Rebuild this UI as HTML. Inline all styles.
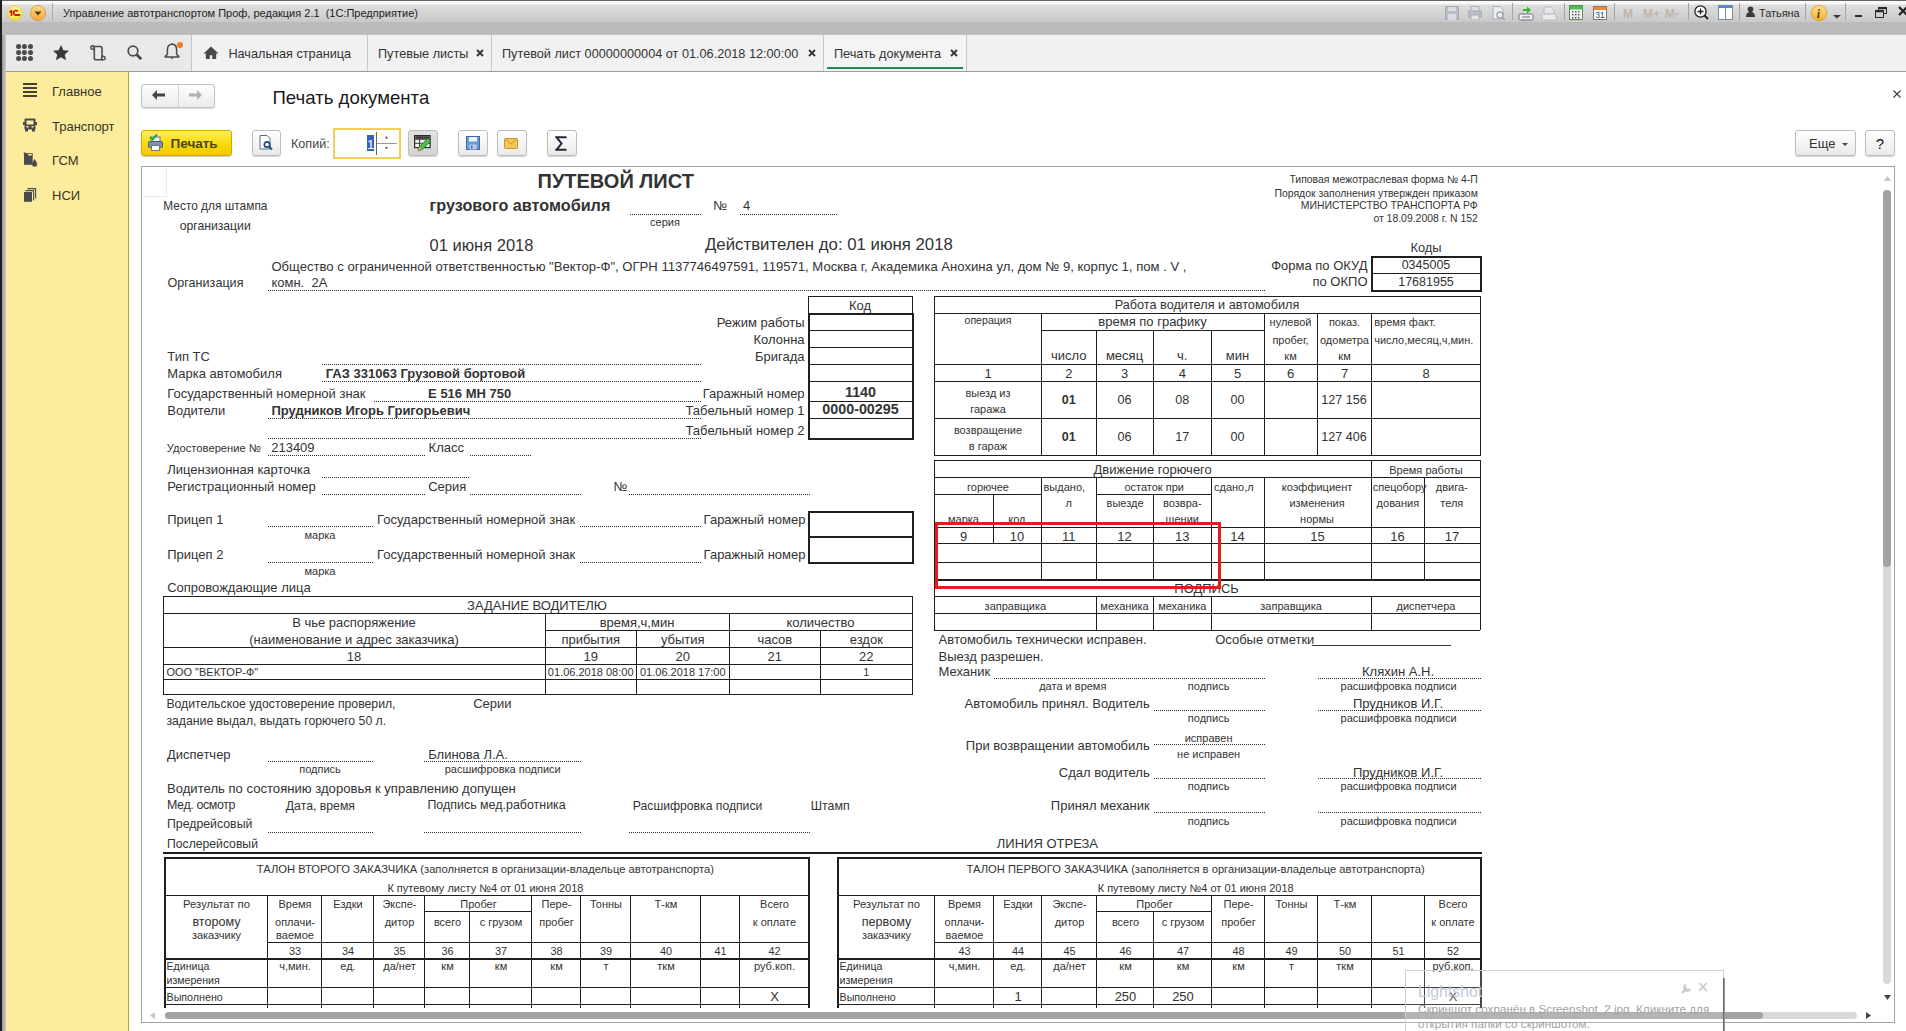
<!DOCTYPE html><html><head><meta charset="utf-8"><style>
html,body{margin:0;padding:0;}
body{width:1906px;height:1031px;overflow:hidden;position:relative;background:#fff;font-family:'Liberation Sans',sans-serif;color:#2a2a2a;}
.t{position:absolute;white-space:pre;}
.b{position:absolute;}
.ic{position:absolute;}
</style></head><body>
<div class="b" style="left:0px;top:0px;width:1906px;height:35px;background:linear-gradient(180deg,#646464 0px,#646464 1px,#fbfbfb 1px,#f8f8f8 4px,#dedede 5px,#c9c9c9 22px,#bbbbbb 22px,#bbbbbb 34px,#c4c4c4 35px);"></div>
<div class="b" style="left:0px;top:0px;width:2px;height:1031px;background:#1e1e1e;"></div>
<div class="b" style="left:2px;top:35px;width:4px;height:996px;background:linear-gradient(90deg,#9a9a9a,#c9c9c9);"></div>
<svg class="ic" style="left:6px;top:5px" width="18" height="17" viewBox="0 0 18 17"><defs><radialGradient id="g1" cx="45%" cy="35%" r="65%"><stop offset="0" stop-color="#fdf8b0"/><stop offset="0.7" stop-color="#f8ea60"/><stop offset="1" stop-color="#f4d820"/></radialGradient></defs><circle cx="9" cy="8" r="7.4" fill="url(#g1)" stroke="#d8c060" stroke-width="0.6"/><path d="M3.2 6.6L5 5H6.3V10.9H4.7V7.3L3.6 7.9z" fill="#d01000"/><path d="M11.7 6.5A2.3 2.3 0 1 0 9.9 10.1" stroke="#d01000" stroke-width="1.7" fill="none"/><rect x="9.6" y="9" width="4.6" height="1.9" fill="#d01000"/></svg>
<svg class="ic" style="left:29px;top:4px" width="18" height="18" viewBox="0 0 18 18"><defs><linearGradient id="g2" x1="0" y1="0" x2="0" y2="1"><stop offset="0" stop-color="#ffd98a"/><stop offset="1" stop-color="#f5a932"/></linearGradient></defs><circle cx="9" cy="9" r="7.6" fill="url(#g2)" stroke="#c99a3e" stroke-width="0.8"/><path d="M5.4 7.6h7.2l-3.6 3.8z" fill="#4a3a20"/></svg>
<div class="b" style="left:52px;top:3px;width:1px;height:17px;background:#a9a9a9;"></div>
<div class="t" style="top:8.35px;font-size:11.0px;line-height:11.0px;color:#1c1c1c;left:63.00px;">Управление автотранспортом Проф, редакция 2.1  (1С:Предприятие)</div>
<svg class="ic" style="left:1445px;top:6px" width="14" height="14" viewBox="0 0 14 14"><rect x="0.5" y="0.5" width="13" height="13" fill="#b9bec6" stroke="#a8adb5"/><rect x="3" y="1" width="8" height="4" fill="#d8dce2"/><rect x="3" y="8" width="8" height="6" fill="#d8dce2"/></svg>
<svg class="ic" style="left:1468px;top:6px" width="14" height="14" viewBox="0 0 14 14"><rect x="3" y="0.5" width="8" height="5" fill="#dde0e4" stroke="#aab0b8"/><rect x="0.5" y="5" width="13" height="6" fill="#b9bec6" stroke="#a8adb5"/><rect x="3" y="9" width="8" height="5" fill="#e4e6ea" stroke="#aab0b8"/></svg>
<svg class="ic" style="left:1492px;top:6px" width="14" height="15" viewBox="0 0 14 15"><path d="M1 0.5h7l3 3V13H1z" fill="#eceef0" stroke="#aab0b8"/><circle cx="8" cy="9" r="3" fill="none" stroke="#a0a6ae" stroke-width="1.4"/><path d="M10 11l3 3" stroke="#a0a6ae" stroke-width="1.6"/></svg>
<div class="b" style="left:1512px;top:3px;width:1px;height:17px;background:#a4a4a4;"></div>
<svg class="ic" style="left:1518px;top:5px" width="16" height="16" viewBox="0 0 16 16"><path d="M5 4h4V1.5l4 3.5-4 3.5V6H5z" fill="#2fb52f"/><rect x="1" y="9" width="14" height="6" rx="1.5" fill="#eef0f2" stroke="#6a7078"/><path d="M4 12h8" stroke="#6a7078"/></svg>
<svg class="ic" style="left:1541px;top:6px" width="16" height="15" viewBox="0 0 16 15"><path d="M3 1h7l3 3v4H3z" fill="#e4e6ea" stroke="#b8bcc2"/><rect x="1" y="8" width="14" height="6" rx="1.5" fill="#e8eaee" stroke="#b8bcc2"/></svg>
<div class="b" style="left:1564px;top:3px;width:1px;height:17px;background:#a4a4a4;"></div>
<svg class="ic" style="left:1569px;top:5px" width="14" height="15" viewBox="0 0 14 15"><rect x="0.5" y="0.5" width="13" height="14" fill="#f4f6f8" stroke="#5d8a5d"/><rect x="1" y="1" width="12" height="3.5" fill="#4cc04c"/><g fill="#555"><rect x="3" y="6" width="1.5" height="1.5"/><rect x="6" y="6" width="1.5" height="1.5"/><rect x="9" y="6" width="1.5" height="1.5"/><rect x="3" y="9" width="1.5" height="1.5"/><rect x="6" y="9" width="1.5" height="1.5"/><rect x="9" y="9" width="1.5" height="1.5"/><rect x="3" y="12" width="1.5" height="1.5"/><rect x="6" y="12" width="1.5" height="1.5"/><rect x="9" y="12" width="1.5" height="1.5"/></g></svg>
<svg class="ic" style="left:1593px;top:5px" width="14" height="15" viewBox="0 0 14 15"><rect x="0.5" y="1.5" width="13" height="13" fill="#fafafa" stroke="#8a7a6a"/><rect x="1" y="2" width="12" height="3" fill="#f08a3a"/><text x="2.3" y="13" font-family="Liberation Sans" font-size="8.5" fill="#2a4a7a">31</text></svg>
<div class="b" style="left:1614px;top:3px;width:1px;height:17px;background:#a4a4a4;"></div>
<div class="t" style="top:7.80px;font-size:12px;line-height:12px;font-weight:bold;color:#c2b6ae;left:1623.00px;">M</div>
<div class="t" style="top:7.80px;font-size:12px;line-height:12px;font-weight:bold;color:#c2b6ae;left:1643.00px;">M+</div>
<div class="t" style="top:7.80px;font-size:12px;line-height:12px;font-weight:bold;color:#c2b6ae;left:1665.00px;">M-</div>
<div class="b" style="left:1688px;top:3px;width:1px;height:17px;background:#a4a4a4;"></div>
<svg class="ic" style="left:1694px;top:5px" width="16" height="16" viewBox="0 0 16 16"><circle cx="6.5" cy="6.5" r="5.6" fill="#fff" stroke="#222" stroke-width="1.3"/><path d="M6.5 3.5v6M3.5 6.5h6" stroke="#222" stroke-width="1.4"/><path d="M10.5 10.5l3.5 3.5" stroke="#222" stroke-width="1.8"/></svg>
<svg class="ic" style="left:1718px;top:5px" width="15" height="15" viewBox="0 0 15 15"><rect x="0.5" y="0.5" width="14" height="14" fill="#fff" stroke="#7a8aa0"/><rect x="1" y="1" width="13" height="2" fill="#4a90d8"/><path d="M7.5 3v11" stroke="#7a8aa0"/></svg>
<div class="b" style="left:1739px;top:3px;width:1px;height:17px;background:#a4a4a4;"></div>
<svg class="ic" style="left:1746px;top:6px" width="9" height="11" viewBox="0 0 9 11"><circle cx="4.5" cy="3.3" r="2.8" fill="#3a3a3a"/><path d="M0 11c0-4 2-5 4.5-5S9 7 9 11z" fill="#3a3a3a"/></svg>
<div class="t" style="top:8.04px;font-size:10.9px;line-height:10.9px;color:#2a2a2a;left:1759.00px;">Татьяна</div>
<div class="b" style="left:1805px;top:3px;width:1px;height:17px;background:#a4a4a4;"></div>
<svg class="ic" style="left:1810px;top:4px" width="18" height="18" viewBox="0 0 18 18"><defs><linearGradient id="g3" x1="0" y1="0" x2="0" y2="1"><stop offset="0" stop-color="#ffe08a"/><stop offset="1" stop-color="#f2b030"/></linearGradient></defs><circle cx="9" cy="9" r="7.8" fill="url(#g3)" stroke="#d89a2a" stroke-width="0.8"/><text x="6.8" y="14" font-family="Liberation Serif" font-style="italic" font-weight="bold" font-size="12" fill="#5a4010">i</text></svg>
<svg class="ic" style="left:1833px;top:15px" width="8" height="4" viewBox="0 0 8 4"><path d="M0 0h8l-4 3.5z" fill="#3a3a3a"/></svg>
<div class="b" style="left:1845px;top:3px;width:1px;height:17px;background:#a4a4a4;"></div>
<div class="b" style="left:1855px;top:15px;width:7px;height:2px;background:#2a2a2a;"></div>
<svg class="ic" style="left:1875px;top:7px" width="12" height="11" viewBox="0 0 12 11"><rect x="3.5" y="0.5" width="8" height="6" fill="none" stroke="#2a2a2a"/><rect x="0.5" y="3.5" width="8" height="7" fill="#d0d0d0" stroke="#2a2a2a"/><path d="M1 4.5h7" stroke="#2a2a2a" stroke-width="1.5"/><path d="M4 1.5h7" stroke="#2a2a2a" stroke-width="1.5"/></svg>
<svg class="ic" style="left:1898px;top:6px" width="10" height="10" viewBox="0 0 10 10"><path d="M1 1l8 8M9 1l-8 8" stroke="#222" stroke-width="2.2"/></svg>
<div class="b" style="left:6px;top:35px;width:1900px;height:36px;background:#f1f1f1;"></div>
<div class="b" style="left:6px;top:71px;width:1900px;height:1px;background:#9c9c9c;"></div>
<div class="b" style="left:6px;top:35px;width:185px;height:36px;background:#e9e9e9;"></div>
<svg class="ic" style="left:16px;top:44px" width="17" height="17" viewBox="0 0 17 17"><circle cx="2.6" cy="2.6" r="2.5" fill="#4a4a4a"/><circle cx="2.6" cy="8.4" r="2.5" fill="#4a4a4a"/><circle cx="2.6" cy="14.4" r="2.5" fill="#4a4a4a"/><circle cx="8.4" cy="2.6" r="2.5" fill="#4a4a4a"/><circle cx="8.4" cy="8.4" r="2.5" fill="#4a4a4a"/><circle cx="8.4" cy="14.4" r="2.5" fill="#4a4a4a"/><circle cx="14.5" cy="2.6" r="2.5" fill="#4a4a4a"/><circle cx="14.5" cy="8.4" r="2.5" fill="#4a4a4a"/><circle cx="14.5" cy="14.4" r="2.5" fill="#4a4a4a"/></svg>
<svg class="ic" style="left:53px;top:45px" width="16" height="16" viewBox="0 0 16 16"><path d="M8 0l2.4 5.2 5.6.6-4.2 3.8 1.2 5.6L8 12.3 3 15.2l1.2-5.6L0 5.8l5.6-.6z" fill="#3a3a3a"/></svg>
<svg class="ic" style="left:90px;top:45px" width="16" height="17" viewBox="0 0 16 17"><path d="M2.5 1.5h7.5c1.2 0 2 .8 2 2V12.5" fill="none" stroke="#4a4a4a" stroke-width="1.6"/><circle cx="2.5" cy="2.6" r="1.8" fill="none" stroke="#4a4a4a" stroke-width="1.4"/><path d="M4.3 2.6V13c0 1 .8 1.8 1.8 1.8H13" fill="none" stroke="#4a4a4a" stroke-width="1.6"/><circle cx="13.3" cy="13" r="1.8" fill="none" stroke="#4a4a4a" stroke-width="1.4"/></svg>
<svg class="ic" style="left:127px;top:45px" width="15" height="15" viewBox="0 0 15 15"><circle cx="6" cy="6" r="4.8" fill="none" stroke="#4a4a4a" stroke-width="1.7"/><path d="M9.6 9.6l4.6 4.6" stroke="#4a4a4a" stroke-width="2.8"/></svg>
<svg class="ic" style="left:164px;top:43px" width="16" height="18" viewBox="0 0 16 18"><path d="M8 1.3c-2.9 0-4.6 2.3-4.6 5.2V11.2L1.2 13.4v0.6h13.6v-0.6L12.6 11.2V6.5C12.6 3.6 10.9 1.3 8 1.3z" fill="none" stroke="#4a4a4a" stroke-width="1.5" stroke-linejoin="round"/><path d="M6.6 14.6h2.8L8 16.4z" fill="#4a4a4a"/><path d="M7 1.2L8 0 9 1.2z" fill="#4a4a4a"/></svg>
<div class="b" style="left:177px;top:42px;width:6px;height:6px;border-radius:50%;background:#f47b20"></div>
<div class="b" style="left:191px;top:35px;width:1px;height:36px;background:#c4c4c4;"></div>
<svg class="ic" style="left:203px;top:46px" width="16" height="14" viewBox="0 0 16 14"><path d="M8 0.5L0.5 7.5h2.3V13h4V9.2h2.4V13h4V7.5h2.3z" fill="#4a4a4a"/></svg>
<div class="t" style="top:47.91px;font-size:12.7px;line-height:12.7px;color:#333;left:228.40px;">Начальная страница</div>
<div class="b" style="left:367px;top:35px;width:1px;height:36px;background:#c8c8c8;"></div>
<div class="t" style="top:47.91px;font-size:12.7px;line-height:12.7px;color:#333;left:378.00px;">Путевые листы</div>
<svg class="ic" style="left:476px;top:49px" width="8" height="8" viewBox="0 0 8 8"><path d="M1 1l6 6M7 1L1 7" stroke="#333" stroke-width="1.8"/></svg>
<div class="b" style="left:491px;top:35px;width:1px;height:36px;background:#c8c8c8;"></div>
<div class="t" style="top:47.91px;font-size:12.7px;line-height:12.7px;color:#333;left:502.00px;">Путевой лист 00000000004 от 01.06.2018 12:00:00</div>
<svg class="ic" style="left:808px;top:49px" width="8" height="8" viewBox="0 0 8 8"><path d="M1 1l6 6M7 1L1 7" stroke="#333" stroke-width="1.8"/></svg>
<div class="b" style="left:823px;top:35px;width:1px;height:36px;background:#c8c8c8;"></div>
<div class="b" style="left:824px;top:35px;width:143px;height:36px;background:#f4f4f4;"></div>
<div class="t" style="top:47.91px;font-size:12.7px;line-height:12.7px;color:#333;left:834.00px;">Печать документа</div>
<svg class="ic" style="left:950px;top:49px" width="8" height="8" viewBox="0 0 8 8"><path d="M1 1l6 6M7 1L1 7" stroke="#333" stroke-width="1.8"/></svg>
<div class="b" style="left:827px;top:67px;width:136px;height:2px;background:#1f8a4c;"></div>
<div class="b" style="left:966px;top:35px;width:1px;height:36px;background:#c8c8c8;"></div>
<div class="b" style="left:6px;top:72px;width:122px;height:959px;background:#fbec9e;"></div>
<div class="b" style="left:128px;top:72px;width:1px;height:959px;background:#ab9f5a;"></div>
<div class="b" style="left:129px;top:72px;width:1px;height:959px;background:#fdfcd6;"></div>
<div class="b" style="left:130px;top:72px;width:1px;height:959px;background:#fefeee;"></div>
<svg class="ic" style="left:23px;top:83px" width="14" height="14" viewBox="0 0 14 14"><rect x="0" y="0" width="14" height="2" fill="#4a4030"/><rect x="0" y="4" width="14" height="2" fill="#4a4030"/><rect x="0" y="8" width="14" height="2" fill="#4a4030"/><rect x="0" y="12" width="14" height="2" fill="#4a4030"/></svg>
<div class="t" style="top:84.95px;font-size:13px;line-height:13px;color:#3a3526;left:52.00px;">Главное</div>
<svg class="ic" style="left:23px;top:118px" width="14" height="14" viewBox="0 0 14 14"><rect x="1.5" y="0.5" width="11" height="11" rx="1" fill="#4a4a4a"/><rect x="3.5" y="2.5" width="7" height="4" fill="#fbec9e"/><rect x="0" y="4" width="2" height="3" fill="#4a4a4a"/><rect x="12" y="4" width="2" height="3" fill="#4a4a4a"/><rect x="2" y="11" width="3" height="2.5" fill="#4a4a4a"/><rect x="9" y="11" width="3" height="2.5" fill="#4a4a4a"/><rect x="3.5" y="8" width="2" height="1.5" fill="#fbec9e"/><rect x="8.5" y="8" width="2" height="1.5" fill="#fbec9e"/></svg>
<div class="t" style="top:119.95px;font-size:13px;line-height:13px;color:#3a3526;left:52.00px;">Транспорт</div>
<svg class="ic" style="left:23px;top:152px" width="15" height="15" viewBox="0 0 15 15"><path d="M1 1.2h8.7V12.8H1z" fill="#4a4a4a"/><rect x="5.2" y="2" width="3.6" height="1.5" fill="#fbec9e"/><path d="M0 1.6l1.2-1.2h1.6v1.6z" fill="#4a4a4a"/><path d="M11.6 7C11.6 7 9.1 10.3 9.1 12.3A2.5 2.5 0 0 0 14.1 12.3C14.1 10.3 11.6 7 11.6 7z" fill="#4a4a4a"/></svg>
<div class="t" style="top:154.45px;font-size:13px;line-height:13px;color:#3a3526;left:52.00px;">ГСМ</div>
<svg class="ic" style="left:23px;top:187px" width="14" height="15" viewBox="0 0 14 15"><rect x="1" y="5" width="8" height="9.8" fill="#4a4a4a"/><path d="M2.4 3.6H10.6V13.4" fill="none" stroke="#4a4a4a" stroke-width="1.1"/><path d="M4.4 1.6H12.6V11.4" fill="none" stroke="#4a4a4a" stroke-width="1.1"/></svg>
<div class="t" style="top:189.45px;font-size:13px;line-height:13px;color:#3a3526;left:52.00px;">НСИ</div>
<div class="b" style="left:141px;top:84px;width:72px;height:22px;border:1px solid #c2c2c2;border-radius:3px;background:linear-gradient(#fdfdfd,#ececec);box-shadow:0 1px 1px rgba(0,0,0,.15)"></div>
<div class="b" style="left:178px;top:85px;width:1px;height:22px;background:#d4d4d4;"></div>
<svg class="ic" style="left:152px;top:90px" width="14" height="10" viewBox="0 0 14 10"><path d="M0 5l5-5v3.5h8v3H5V10z" fill="#444"/></svg>
<svg class="ic" style="left:188px;top:90px" width="14" height="10" viewBox="0 0 14 10"><path d="M14 5L9 0v3.5H1v3h8V10z" fill="#b0b0b0"/></svg>
<div class="t" style="top:88.69px;font-size:18.6px;line-height:18.6px;color:#1a1a1a;left:272.50px;">Печать документа</div>
<svg class="ic" style="left:1893px;top:90px" width="8" height="8" viewBox="0 0 8 8"><path d="M0.5 0.5l7 7M7.5 0.5l-7 7" stroke="#444" stroke-width="1.3"/></svg>
<div class="b" style="left:141px;top:130px;width:89px;height:24px;border:1px solid #d2a800;border-radius:3px;background:linear-gradient(#ffef5a,#f8d800 60%,#f0c800);box-shadow:0 1px 1px rgba(0,0,0,.2)"></div>
<svg class="ic" style="left:148px;top:134px" width="16" height="17" viewBox="0 0 16 17"><rect x="3" y="3" width="9" height="5" fill="#eef3f8" stroke="#6a7a8a"/><rect x="0.5" y="7.5" width="14" height="6" rx="1" fill="#7a92b0" stroke="#4a5a70"/><rect x="3.5" y="11.5" width="8" height="5" fill="#fff" stroke="#6a7a8a"/><path d="M2 3l2.5 2.5L9 0.5" fill="none" stroke="#22aa22" stroke-width="2"/></svg>
<div class="t" style="top:136.83px;font-size:13.5px;line-height:13.5px;font-weight:bold;color:#4e4418;left:170.50px;">Печать</div>
<div class="b" style="left:252px;top:130px;width:27px;height:24px;border:1px solid #bdbdbd;border-radius:3px;background:linear-gradient(#ffffff,#f4f4f4 55%,#e9e9e9);box-shadow:0 1px 1px rgba(0,0,0,.18)"></div>
<svg class="ic" style="left:259px;top:135px" width="15" height="16" viewBox="0 0 15 16"><path d="M1 0.5h7l3 3V14H1z" fill="#fff" stroke="#5a6a7a"/><circle cx="8" cy="9.5" r="2.7" fill="none" stroke="#174a80" stroke-width="1.7"/><path d="M10 11.5l3 3" stroke="#174a80" stroke-width="2"/></svg>
<div class="t" style="top:138.29px;font-size:12.6px;line-height:12.6px;color:#444;left:291.00px;">Копий:</div>
<div class="b" style="left:333px;top:128px;width:64px;height:27px;border:2px solid #f4cf57;background:#fff"></div>
<div class="b" style="left:367px;top:135px;width:7px;height:16px;background:#3b5fc6;"></div>
<div class="t" style="top:137.95px;font-size:13px;line-height:13px;color:#fff;left:360.50px;width:20px;text-align:center;">1</div>
<div class="b" style="left:376px;top:132px;width:1px;height:23px;background:#666;"></div>
<div class="b" style="left:377px;top:143px;width:20px;height:1px;background:#999;"></div>
<svg class="ic" style="left:385px;top:136px" width="3" height="3" viewBox="0 0 3 3"><path d="M0 2.5h3L1.5 0z" fill="#555"/></svg>
<svg class="ic" style="left:385px;top:147px" width="3" height="3" viewBox="0 0 3 3"><path d="M0 0h3L1.5 2.5z" fill="#555"/></svg>
<div class="b" style="left:408px;top:130px;width:28px;height:24px;border:1px solid #bdbdbd;border-radius:3px;background:linear-gradient(#e2e2e2,#d4d4d4);box-shadow:0 1px 1px rgba(0,0,0,.18)"></div>
<svg class="ic" style="left:414px;top:135px" width="18" height="17" viewBox="0 0 18 17"><rect x="0.6" y="0.6" width="15.5" height="12" fill="#f2f2f2" stroke="#2a2a2a" stroke-width="1.2"/><rect x="1.2" y="1.2" width="14.3" height="2.6" fill="#3a3a3a"/><path d="M0.6 4.3h15.5M0.6 8.3h15.5M5.6 0.6v12" stroke="#3a3a3a" stroke-width="1"/><path d="M4 16l1.2-4.2 8.6-8.6 3 3-8.6 8.6z" fill="#4cbc4c" stroke="#2c6e2c" stroke-width="0.8"/><path d="M4 16l1.2-4.2 3 3z" fill="#d9a066"/></svg>
<div class="b" style="left:458px;top:130px;width:28px;height:24px;border:1px solid #bdbdbd;border-radius:3px;background:linear-gradient(#ffffff,#f4f4f4 55%,#e9e9e9);box-shadow:0 1px 1px rgba(0,0,0,.18)"></div>
<svg class="ic" style="left:466px;top:136px" width="14" height="14" viewBox="0 0 14 14"><rect x="0.5" y="0.5" width="13" height="13" fill="#6a9ad8" stroke="#3a6aaa"/><rect x="3" y="1" width="8" height="4.5" fill="#eef4fa"/><rect x="3.5" y="8.5" width="7" height="5" fill="#b8cce4"/><rect x="5" y="9.5" width="1.5" height="3" fill="#3a6aaa"/></svg>
<div class="b" style="left:497px;top:130px;width:28px;height:24px;border:1px solid #bdbdbd;border-radius:3px;background:linear-gradient(#ffffff,#f4f4f4 55%,#e9e9e9);box-shadow:0 1px 1px rgba(0,0,0,.18)"></div>
<svg class="ic" style="left:504px;top:138px" width="14" height="11" viewBox="0 0 14 11"><rect x="0.5" y="0.5" width="13" height="10" rx="1" fill="#f6c55a" stroke="#c8962a"/><path d="M1 1l6 5 6-5" fill="none" stroke="#c8962a" stroke-width="1"/></svg>
<div class="b" style="left:547px;top:130px;width:28px;height:24px;border:1px solid #bdbdbd;border-radius:3px;background:linear-gradient(#ffffff,#f4f4f4 55%,#e9e9e9);box-shadow:0 1px 1px rgba(0,0,0,.18)"></div>
<svg class="ic" style="left:555px;top:136px" width="13" height="15" viewBox="0 0 13 15"><path d="M11.5 1.2H1.5L6.5 7.5L1.5 13.8H11.5" fill="none" stroke="#1e2a36" stroke-width="2"/></svg>
<div class="b" style="left:1795px;top:130px;width:59px;height:24px;border:1px solid #bdbdbd;border-radius:3px;background:linear-gradient(#ffffff,#f4f4f4 55%,#e9e9e9);box-shadow:0 1px 1px rgba(0,0,0,.18)"></div>
<div class="t" style="top:136.95px;font-size:13px;line-height:13px;color:#333;left:1809.00px;">Еще</div>
<svg class="ic" style="left:1842px;top:143px" width="6" height="3" viewBox="0 0 6 3"><path d="M0 0h6L3 3z" fill="#444"/></svg>
<div class="b" style="left:1865px;top:130px;width:28px;height:24px;border:1px solid #bdbdbd;border-radius:3px;background:linear-gradient(#ffffff,#f4f4f4 55%,#e9e9e9);box-shadow:0 1px 1px rgba(0,0,0,.18)"></div>
<div class="t" style="top:136.25px;font-size:15px;line-height:15px;color:#111;left:1870.00px;width:20px;text-align:center;">?</div>
<div class="b" style="left:141px;top:166px;width:1752px;height:855px;border:1px solid #a2a3a7;background:#fff"></div>
<div class="b" style="left:166px;top:168px;width:1px;height:29px;background:#ebebeb;"></div>
<div class="b" style="left:143px;top:196px;width:24px;height:1px;background:#ebebeb;"></div>
<div class="t" style="top:171.00px;font-size:20px;line-height:20px;font-weight:bold;color:#333333;left:537.50px;">ПУТЕВОЙ ЛИСТ</div>
<div class="t" style="top:196.73px;font-size:16.2px;line-height:16.2px;font-weight:bold;color:#333333;left:429.60px;">грузового автомобиля</div>
<div class="b" style="left:630px;top:214px;width:72px;height:1px;background:repeating-linear-gradient(90deg,#2a2a2a 0 1px,transparent 1px 2px);"></div>
<div class="t" style="top:216.75px;font-size:11px;line-height:11px;color:#333333;left:615.00px;width:100px;text-align:center;">серия</div>
<div class="t" style="top:199.45px;font-size:13px;line-height:13px;color:#333333;left:713.30px;">№</div>
<div class="t" style="top:199.45px;font-size:13px;line-height:13px;color:#333333;left:743.00px;">4</div>
<div class="b" style="left:740px;top:214px;width:98px;height:1px;background:repeating-linear-gradient(90deg,#2a2a2a 0 1px,transparent 1px 2px);"></div>
<div class="t" style="top:201.38px;font-size:11.9px;line-height:11.9px;color:#333333;left:163.30px;">Место для штампа</div>
<div class="t" style="top:219.63px;font-size:12.2px;line-height:12.2px;color:#333333;left:179.70px;">организации</div>
<div class="t" style="top:236.97px;font-size:16.5px;line-height:16.5px;color:#333333;left:429.60px;">01 июня 2018</div>
<div class="t" style="top:236.72px;font-size:16.8px;line-height:16.8px;color:#333333;left:705.00px;">Действителен до: 01 июня 2018</div>
<div class="t" style="top:175.13px;font-size:10.43px;line-height:10.43px;color:#333333;left:677.80px;width:800px;text-align:right;">Типовая межотраслевая форма № 4-П</div>
<div class="t" style="top:188.53px;font-size:10.43px;line-height:10.43px;color:#333333;left:677.80px;width:800px;text-align:right;">Порядок заполнения утвержден приказом</div>
<div class="t" style="top:201.13px;font-size:10.43px;line-height:10.43px;color:#333333;left:677.80px;width:800px;text-align:right;">МИНИСТЕРСТВО ТРАНСПОРТА РФ</div>
<div class="t" style="top:213.93px;font-size:10.43px;line-height:10.43px;color:#333333;left:677.80px;width:800px;text-align:right;">от 18.09.2008 г. N 152</div>
<div class="t" style="top:242.13px;font-size:12.9px;line-height:12.9px;color:#333333;left:1376.00px;width:100px;text-align:center;">Коды</div>
<div class="t" style="top:259.05px;font-size:13px;line-height:13px;color:#333333;left:567.50px;width:800px;text-align:right;">Форма по ОКУД</div>
<div class="t" style="top:275.45px;font-size:13px;line-height:13px;color:#333333;left:567.50px;width:800px;text-align:right;">по ОКПО</div>
<div class="b" style="left:1371px;top:256px;width:107px;height:32px;border:2px solid #1e1e1e;"></div>
<div class="b" style="left:1373px;top:273px;width:107px;height:1px;background:#1e1e1e;"></div>
<div class="t" style="top:259.48px;font-size:12.5px;line-height:12.5px;color:#333333;left:1376.00px;width:100px;text-align:center;">0345005</div>
<div class="t" style="top:275.88px;font-size:12.5px;line-height:12.5px;color:#333333;left:1376.00px;width:100px;text-align:center;">17681955</div>
<div class="t" style="top:276.79px;font-size:12.6px;line-height:12.6px;color:#333333;left:167.50px;">Организация</div>
<div class="t" style="top:259.87px;font-size:13.1px;line-height:13.1px;color:#333333;left:271.40px;">Общество с ограниченной ответственностью &quot;Вектор-Ф&quot;, ОГРН 1137746497591, 119571, Москва г, Академика Анохина ул, дом № 9, корпус 1, пом . V ,</div>
<div class="t" style="top:276.45px;font-size:13px;line-height:13px;color:#333333;left:271.40px;">комн.  2А</div>
<div class="b" style="left:268px;top:290px;width:998px;height:1px;background:repeating-linear-gradient(90deg,#2a2a2a 0 1px,transparent 1px 2px);"></div>
<div class="t" style="top:349.95px;font-size:13px;line-height:13px;color:#333333;left:167.30px;">Тип ТС</div>
<div class="b" style="left:322px;top:364px;width:380px;height:1px;background:repeating-linear-gradient(90deg,#2a2a2a 0 1px,transparent 1px 2px);"></div>
<div class="t" style="top:367.25px;font-size:13px;line-height:13px;color:#333333;left:167.30px;">Марка автомобиля</div>
<div class="t" style="top:367.25px;font-size:13px;line-height:13px;font-weight:bold;color:#333333;left:325.80px;">ГАЗ 331063 Грузовой бортовой</div>
<div class="b" style="left:322px;top:381px;width:380px;height:1px;background:repeating-linear-gradient(90deg,#2a2a2a 0 1px,transparent 1px 2px);"></div>
<div class="t" style="top:386.95px;font-size:13px;line-height:13px;color:#333333;left:167.30px;">Государственный номерной знак</div>
<div class="t" style="top:386.95px;font-size:13px;line-height:13px;font-weight:bold;color:#333333;left:428.10px;">Е 516 МН 750</div>
<div class="b" style="left:374px;top:401px;width:328px;height:1px;background:repeating-linear-gradient(90deg,#2a2a2a 0 1px,transparent 1px 2px);"></div>
<div class="t" style="top:404.25px;font-size:13px;line-height:13px;color:#333333;left:167.30px;">Водители</div>
<div class="t" style="top:404.25px;font-size:13px;line-height:13px;font-weight:bold;color:#333333;left:271.50px;">Прудников Игорь Григорьевич</div>
<div class="b" style="left:268px;top:418px;width:434px;height:1px;background:repeating-linear-gradient(90deg,#2a2a2a 0 1px,transparent 1px 2px);"></div>
<div class="b" style="left:268px;top:438px;width:434px;height:1px;background:repeating-linear-gradient(90deg,#2a2a2a 0 1px,transparent 1px 2px);"></div>
<div class="t" style="top:442.78px;font-size:11.2px;line-height:11.2px;color:#333333;left:166.80px;">Удостоверение №</div>
<div class="t" style="top:441.25px;font-size:13px;line-height:13px;color:#333333;left:271.20px;">213409</div>
<div class="b" style="left:268px;top:455px;width:157px;height:1px;background:repeating-linear-gradient(90deg,#2a2a2a 0 1px,transparent 1px 2px);"></div>
<div class="t" style="top:441.25px;font-size:13px;line-height:13px;color:#333333;left:428.60px;">Класс</div>
<div class="b" style="left:470px;top:455px;width:61px;height:1px;background:repeating-linear-gradient(90deg,#2a2a2a 0 1px,transparent 1px 2px);"></div>
<div class="b" style="left:808px;top:296px;width:103px;height:16px;border:1px solid #1e1e1e;"></div>
<div class="t" style="top:298.85px;font-size:13px;line-height:13px;color:#333333;left:810.00px;width:100px;text-align:center;">Код</div>
<div class="b" style="left:808px;top:313px;width:102px;height:123px;border:2px solid #1e1e1e;"></div>
<div class="b" style="left:810px;top:330px;width:102px;height:1px;background:#1e1e1e;"></div>
<div class="b" style="left:810px;top:347px;width:102px;height:1px;background:#1e1e1e;"></div>
<div class="b" style="left:810px;top:364px;width:102px;height:1px;background:#1e1e1e;"></div>
<div class="b" style="left:810px;top:381px;width:102px;height:1px;background:#1e1e1e;"></div>
<div class="b" style="left:810px;top:401px;width:102px;height:1px;background:#1e1e1e;"></div>
<div class="b" style="left:810px;top:418px;width:102px;height:1px;background:#1e1e1e;"></div>
<div class="t" style="top:316.25px;font-size:13px;line-height:13px;color:#333333;left:4.60px;width:800px;text-align:right;">Режим работы</div>
<div class="t" style="top:333.05px;font-size:13px;line-height:13px;color:#333333;left:4.60px;width:800px;text-align:right;">Колонна</div>
<div class="t" style="top:350.05px;font-size:13px;line-height:13px;color:#333333;left:4.60px;width:800px;text-align:right;">Бригада</div>
<div class="t" style="top:386.85px;font-size:13px;line-height:13px;color:#333333;left:4.60px;width:800px;text-align:right;">Гаражный номер</div>
<div class="t" style="top:403.85px;font-size:13px;line-height:13px;color:#333333;left:4.60px;width:800px;text-align:right;">Табельный номер 1</div>
<div class="t" style="top:423.75px;font-size:13px;line-height:13px;color:#333333;left:4.60px;width:800px;text-align:right;">Табельный номер 2</div>
<div class="t" style="top:384.95px;font-size:14.3px;line-height:14.3px;font-weight:bold;color:#333333;left:810.50px;width:100px;text-align:center;">1140</div>
<div class="t" style="top:401.75px;font-size:14.3px;line-height:14.3px;font-weight:bold;color:#333333;left:810.50px;width:100px;text-align:center;">0000-00295</div>
<div class="t" style="top:462.85px;font-size:13px;line-height:13px;color:#333333;left:167.20px;">Лицензионная карточка</div>
<div class="b" style="left:322px;top:477px;width:148px;height:1px;background:repeating-linear-gradient(90deg,#2a2a2a 0 1px,transparent 1px 2px);"></div>
<div class="t" style="top:480.05px;font-size:13px;line-height:13px;color:#333333;left:167.20px;">Регистрационный номер</div>
<div class="b" style="left:322px;top:494px;width:104px;height:1px;background:repeating-linear-gradient(90deg,#2a2a2a 0 1px,transparent 1px 2px);"></div>
<div class="t" style="top:480.05px;font-size:13px;line-height:13px;color:#333333;left:428.20px;">Серия</div>
<div class="b" style="left:470px;top:494px;width:112px;height:1px;background:repeating-linear-gradient(90deg,#2a2a2a 0 1px,transparent 1px 2px);"></div>
<div class="t" style="top:480.05px;font-size:13px;line-height:13px;color:#333333;left:613.60px;">№</div>
<div class="b" style="left:629px;top:494px;width:181px;height:1px;background:repeating-linear-gradient(90deg,#2a2a2a 0 1px,transparent 1px 2px);"></div>
<div class="t" style="top:513.15px;font-size:13px;line-height:13px;color:#333333;left:167.20px;">Прицеп 1</div>
<div class="b" style="left:268px;top:526px;width:106px;height:1px;background:repeating-linear-gradient(90deg,#2a2a2a 0 1px,transparent 1px 2px);"></div>
<div class="t" style="top:513.15px;font-size:13px;line-height:13px;color:#333333;left:377.10px;">Государственный номерной знак</div>
<div class="b" style="left:580px;top:526px;width:122px;height:1px;background:repeating-linear-gradient(90deg,#2a2a2a 0 1px,transparent 1px 2px);"></div>
<div class="t" style="top:513.15px;font-size:13px;line-height:13px;color:#333333;left:703.60px;">Гаражный номер</div>
<div class="t" style="top:547.95px;font-size:13px;line-height:13px;color:#333333;left:167.20px;">Прицеп 2</div>
<div class="b" style="left:268px;top:562px;width:106px;height:1px;background:repeating-linear-gradient(90deg,#2a2a2a 0 1px,transparent 1px 2px);"></div>
<div class="t" style="top:547.95px;font-size:13px;line-height:13px;color:#333333;left:377.10px;">Государственный номерной знак</div>
<div class="b" style="left:580px;top:562px;width:122px;height:1px;background:repeating-linear-gradient(90deg,#2a2a2a 0 1px,transparent 1px 2px);"></div>
<div class="t" style="top:547.95px;font-size:13px;line-height:13px;color:#333333;left:703.60px;">Гаражный номер</div>
<div class="t" style="top:530.05px;font-size:11px;line-height:11px;color:#333333;left:270.00px;width:100px;text-align:center;">марка</div>
<div class="t" style="top:565.65px;font-size:11px;line-height:11px;color:#333333;left:270.00px;width:100px;text-align:center;">марка</div>
<div class="b" style="left:808px;top:511px;width:102px;height:49px;border:2px solid #1e1e1e;"></div>
<div class="b" style="left:810px;top:536px;width:102px;height:2px;background:#1e1e1e;"></div>
<div class="t" style="top:581.45px;font-size:13px;line-height:13px;color:#333333;left:167.20px;">Сопровождающие лица</div>
<div class="b" style="left:163px;top:596px;width:748px;height:97px;border:1px solid #1e1e1e;"></div>
<div class="b" style="left:163px;top:613px;width:749px;height:1px;background:#1e1e1e;"></div>
<div class="b" style="left:163px;top:647px;width:749px;height:1px;background:#1e1e1e;"></div>
<div class="b" style="left:163px;top:664px;width:749px;height:1px;background:#1e1e1e;"></div>
<div class="b" style="left:163px;top:679px;width:749px;height:1px;background:#1e1e1e;"></div>
<div class="b" style="left:545px;top:630px;width:367px;height:1px;background:#1e1e1e;"></div>
<div class="b" style="left:545px;top:613px;width:1px;height:81px;background:#1e1e1e;"></div>
<div class="b" style="left:636px;top:630px;width:1px;height:64px;background:#1e1e1e;"></div>
<div class="b" style="left:729px;top:613px;width:1px;height:81px;background:#1e1e1e;"></div>
<div class="b" style="left:820px;top:630px;width:1px;height:64px;background:#1e1e1e;"></div>
<div class="t" style="top:599.05px;font-size:13px;line-height:13px;color:#333333;left:237.00px;width:600px;text-align:center;">ЗАДАНИЕ ВОДИТЕЛЮ</div>
<div class="t" style="top:616.25px;font-size:13px;line-height:13px;color:#333333;left:54.00px;width:600px;text-align:center;">В чье распоряжение</div>
<div class="t" style="top:633.45px;font-size:13px;line-height:13px;color:#333333;left:54.00px;width:600px;text-align:center;">(наименование и адрес заказчика)</div>
<div class="t" style="top:616.25px;font-size:13px;line-height:13px;color:#333333;left:337.00px;width:600px;text-align:center;">время,ч,мин</div>
<div class="t" style="top:616.25px;font-size:13px;line-height:13px;color:#333333;left:520.50px;width:600px;text-align:center;">количество</div>
<div class="t" style="top:633.45px;font-size:13px;line-height:13px;color:#333333;left:290.70px;width:600px;text-align:center;">прибытия</div>
<div class="t" style="top:633.45px;font-size:13px;line-height:13px;color:#333333;left:382.80px;width:600px;text-align:center;">убытия</div>
<div class="t" style="top:633.45px;font-size:13px;line-height:13px;color:#333333;left:474.80px;width:600px;text-align:center;">часов</div>
<div class="t" style="top:633.45px;font-size:13px;line-height:13px;color:#333333;left:566.30px;width:600px;text-align:center;">ездок</div>
<div class="t" style="top:649.85px;font-size:13px;line-height:13px;color:#333333;left:54.00px;width:600px;text-align:center;">18</div>
<div class="t" style="top:649.85px;font-size:13px;line-height:13px;color:#333333;left:290.70px;width:600px;text-align:center;">19</div>
<div class="t" style="top:649.85px;font-size:13px;line-height:13px;color:#333333;left:382.80px;width:600px;text-align:center;">20</div>
<div class="t" style="top:649.85px;font-size:13px;line-height:13px;color:#333333;left:474.80px;width:600px;text-align:center;">21</div>
<div class="t" style="top:649.85px;font-size:13px;line-height:13px;color:#333333;left:566.30px;width:600px;text-align:center;">22</div>
<div class="t" style="top:667.05px;font-size:11px;line-height:11px;color:#333333;left:166.40px;">ООО &quot;ВЕКТОР-Ф&quot;</div>
<div class="t" style="top:667.05px;font-size:11px;line-height:11px;color:#333333;left:290.70px;width:600px;text-align:center;">01.06.2018 08:00</div>
<div class="t" style="top:667.05px;font-size:11px;line-height:11px;color:#333333;left:382.80px;width:600px;text-align:center;">01.06.2018 17:00</div>
<div class="t" style="top:667.05px;font-size:11px;line-height:11px;color:#333333;left:566.30px;width:600px;text-align:center;">1</div>
<div class="t" style="top:697.89px;font-size:12.25px;line-height:12.25px;color:#333333;left:166.40px;">Водительское удостоверение проверил,</div>
<div class="t" style="top:697.25px;font-size:13px;line-height:13px;color:#333333;left:473.20px;">Серии</div>
<div class="t" style="top:715.09px;font-size:12.25px;line-height:12.25px;color:#333333;left:166.40px;">задание выдал, выдать горючего 50 л.</div>
<div class="t" style="top:747.75px;font-size:13px;line-height:13px;color:#333333;left:167.00px;">Диспетчер</div>
<div class="b" style="left:268px;top:761px;width:106px;height:1px;background:repeating-linear-gradient(90deg,#2a2a2a 0 1px,transparent 1px 2px);"></div>
<div class="t" style="top:747.75px;font-size:13px;line-height:13px;color:#333333;left:428.20px;">Блинова Л.А.</div>
<div class="b" style="left:424px;top:761px;width:158px;height:1px;background:repeating-linear-gradient(90deg,#2a2a2a 0 1px,transparent 1px 2px);"></div>
<div class="t" style="top:764.15px;font-size:11px;line-height:11px;color:#333333;left:20.00px;width:600px;text-align:center;">подпись</div>
<div class="t" style="top:764.15px;font-size:11px;line-height:11px;color:#333333;left:202.70px;width:600px;text-align:center;">расшифровка подписи</div>
<div class="t" style="top:781.66px;font-size:13.1px;line-height:13.1px;color:#333333;left:167.00px;">Водитель по состоянию здоровья к управлению допущен</div>
<div class="t" style="top:799.46px;font-size:12.4px;line-height:12.4px;color:#333333;left:167.00px;letter-spacing:-0.35px;">Мед. осмотр</div>
<div class="t" style="top:799.57px;font-size:12.27px;line-height:12.27px;color:#333333;left:285.80px;">Дата, время</div>
<div class="t" style="top:799.42px;font-size:12.45px;line-height:12.45px;color:#333333;left:427.40px;">Подпись мед.работника</div>
<div class="t" style="top:799.63px;font-size:12.2px;line-height:12.2px;color:#333333;left:632.80px;">Расшифровка подписи</div>
<div class="t" style="top:799.50px;font-size:12.35px;line-height:12.35px;color:#333333;left:810.80px;">Штамп</div>
<div class="t" style="top:818.34px;font-size:12.3px;line-height:12.3px;color:#333333;left:167.00px;">Предрейсовый</div>
<div class="b" style="left:268px;top:832px;width:106px;height:1px;background:repeating-linear-gradient(90deg,#2a2a2a 0 1px,transparent 1px 2px);"></div>
<div class="b" style="left:424px;top:832px;width:158px;height:1px;background:repeating-linear-gradient(90deg,#2a2a2a 0 1px,transparent 1px 2px);"></div>
<div class="b" style="left:629px;top:832px;width:181px;height:1px;background:repeating-linear-gradient(90deg,#2a2a2a 0 1px,transparent 1px 2px);"></div>
<div class="t" style="top:837.63px;font-size:12.2px;line-height:12.2px;color:#333333;left:167.00px;">Послерейсовый</div>
<div class="b" style="left:934px;top:296px;width:545px;height:158px;border:1px solid #1e1e1e;"></div>
<div class="b" style="left:934px;top:313px;width:546px;height:1px;background:#1e1e1e;"></div>
<div class="b" style="left:934px;top:364px;width:546px;height:1px;background:#1e1e1e;"></div>
<div class="b" style="left:934px;top:381px;width:546px;height:1px;background:#1e1e1e;"></div>
<div class="b" style="left:934px;top:418px;width:546px;height:1px;background:#1e1e1e;"></div>
<div class="b" style="left:1041px;top:330px;width:223px;height:1px;background:#1e1e1e;"></div>
<div class="b" style="left:1041px;top:313px;width:1px;height:142px;background:#1e1e1e;"></div>
<div class="b" style="left:1096px;top:330px;width:1px;height:125px;background:#1e1e1e;"></div>
<div class="b" style="left:1153px;top:330px;width:1px;height:125px;background:#1e1e1e;"></div>
<div class="b" style="left:1211px;top:330px;width:1px;height:125px;background:#1e1e1e;"></div>
<div class="b" style="left:1264px;top:313px;width:1px;height:142px;background:#1e1e1e;"></div>
<div class="b" style="left:1317px;top:313px;width:1px;height:142px;background:#1e1e1e;"></div>
<div class="b" style="left:1371px;top:313px;width:1px;height:142px;background:#1e1e1e;"></div>
<div class="t" style="top:299.00px;font-size:12.7px;line-height:12.7px;color:#333333;left:907.00px;width:600px;text-align:center;">Работа водителя и автомобиля</div>
<div class="t" style="top:314.69px;font-size:10.6px;line-height:10.6px;color:#333333;left:688.00px;width:600px;text-align:center;">операция</div>
<div class="t" style="top:315.05px;font-size:13px;line-height:13px;color:#333333;left:852.50px;width:600px;text-align:center;">время по графику</div>
<div class="t" style="top:316.75px;font-size:11px;line-height:11px;color:#333333;left:990.50px;width:600px;text-align:center;">нулевой</div>
<div class="t" style="top:334.55px;font-size:11px;line-height:11px;color:#333333;left:990.50px;width:600px;text-align:center;">пробег,</div>
<div class="t" style="top:350.85px;font-size:11px;line-height:11px;color:#333333;left:990.50px;width:600px;text-align:center;">км</div>
<div class="t" style="top:316.75px;font-size:11px;line-height:11px;color:#333333;left:1044.50px;width:600px;text-align:center;">показ.</div>
<div class="t" style="top:334.55px;font-size:11px;line-height:11px;color:#333333;left:1044.50px;width:600px;text-align:center;">одометра</div>
<div class="t" style="top:350.85px;font-size:11px;line-height:11px;color:#333333;left:1044.50px;width:600px;text-align:center;">км</div>
<div class="t" style="top:316.75px;font-size:11px;line-height:11px;color:#333333;left:1374.20px;">время факт.</div>
<div class="t" style="top:334.55px;font-size:11px;line-height:11px;color:#333333;left:1374.20px;">число,месяц,ч,мин.</div>
<div class="t" style="top:348.55px;font-size:13px;line-height:13px;color:#333333;left:768.80px;width:600px;text-align:center;">число</div>
<div class="t" style="top:348.55px;font-size:13px;line-height:13px;color:#333333;left:824.50px;width:600px;text-align:center;">месяц</div>
<div class="t" style="top:348.55px;font-size:13px;line-height:13px;color:#333333;left:882.30px;width:600px;text-align:center;">ч.</div>
<div class="t" style="top:348.55px;font-size:13px;line-height:13px;color:#333333;left:937.50px;width:600px;text-align:center;">мин</div>
<div class="t" style="top:366.95px;font-size:13px;line-height:13px;color:#333333;left:688.00px;width:600px;text-align:center;">1</div>
<div class="t" style="top:366.95px;font-size:13px;line-height:13px;color:#333333;left:768.80px;width:600px;text-align:center;">2</div>
<div class="t" style="top:366.95px;font-size:13px;line-height:13px;color:#333333;left:824.50px;width:600px;text-align:center;">3</div>
<div class="t" style="top:366.95px;font-size:13px;line-height:13px;color:#333333;left:882.30px;width:600px;text-align:center;">4</div>
<div class="t" style="top:366.95px;font-size:13px;line-height:13px;color:#333333;left:937.50px;width:600px;text-align:center;">5</div>
<div class="t" style="top:366.95px;font-size:13px;line-height:13px;color:#333333;left:990.50px;width:600px;text-align:center;">6</div>
<div class="t" style="top:366.95px;font-size:13px;line-height:13px;color:#333333;left:1044.50px;width:600px;text-align:center;">7</div>
<div class="t" style="top:366.95px;font-size:13px;line-height:13px;color:#333333;left:1126.00px;width:600px;text-align:center;">8</div>
<div class="t" style="top:387.85px;font-size:11px;line-height:11px;color:#333333;left:688.00px;width:600px;text-align:center;">выезд из</div>
<div class="t" style="top:404.15px;font-size:11px;line-height:11px;color:#333333;left:688.00px;width:600px;text-align:center;">гаража</div>
<div class="t" style="top:424.95px;font-size:11px;line-height:11px;color:#333333;left:688.00px;width:600px;text-align:center;">возвращение</div>
<div class="t" style="top:441.25px;font-size:11px;line-height:11px;color:#333333;left:688.00px;width:600px;text-align:center;">в гараж</div>
<div class="t" style="top:394.39px;font-size:12.6px;line-height:12.6px;font-weight:bold;color:#333333;left:768.80px;width:600px;text-align:center;">01</div>
<div class="t" style="top:394.39px;font-size:12.6px;line-height:12.6px;color:#333333;left:824.50px;width:600px;text-align:center;">06</div>
<div class="t" style="top:394.39px;font-size:12.6px;line-height:12.6px;color:#333333;left:882.30px;width:600px;text-align:center;">08</div>
<div class="t" style="top:394.39px;font-size:12.6px;line-height:12.6px;color:#333333;left:937.50px;width:600px;text-align:center;">00</div>
<div class="t" style="top:394.39px;font-size:12.6px;line-height:12.6px;color:#333333;left:1044.00px;width:600px;text-align:center;">127 156</div>
<div class="t" style="top:431.29px;font-size:12.6px;line-height:12.6px;font-weight:bold;color:#333333;left:768.80px;width:600px;text-align:center;">01</div>
<div class="t" style="top:431.29px;font-size:12.6px;line-height:12.6px;color:#333333;left:824.50px;width:600px;text-align:center;">06</div>
<div class="t" style="top:431.29px;font-size:12.6px;line-height:12.6px;color:#333333;left:882.30px;width:600px;text-align:center;">17</div>
<div class="t" style="top:431.29px;font-size:12.6px;line-height:12.6px;color:#333333;left:937.50px;width:600px;text-align:center;">00</div>
<div class="t" style="top:431.29px;font-size:12.6px;line-height:12.6px;color:#333333;left:1044.00px;width:600px;text-align:center;">127 406</div>
<div class="b" style="left:934px;top:460px;width:546px;height:1px;background:#1e1e1e;"></div>
<div class="b" style="left:934px;top:460px;width:1px;height:170px;background:#1e1e1e;"></div>
<div class="b" style="left:1480px;top:460px;width:1px;height:170px;background:#1e1e1e;"></div>
<div class="b" style="left:934px;top:477px;width:546px;height:1px;background:#1e1e1e;"></div>
<div class="b" style="left:934px;top:527px;width:546px;height:1px;background:#1e1e1e;"></div>
<div class="b" style="left:934px;top:543px;width:546px;height:1px;background:#1e1e1e;"></div>
<div class="b" style="left:934px;top:562px;width:546px;height:1px;background:#1e1e1e;"></div>
<div class="b" style="left:934px;top:579px;width:547px;height:2px;background:#1e1e1e;"></div>
<div class="b" style="left:934px;top:494px;width:107px;height:1px;background:#1e1e1e;"></div>
<div class="b" style="left:1096px;top:494px;width:115px;height:1px;background:#1e1e1e;"></div>
<div class="b" style="left:1371px;top:460px;width:1px;height:119px;background:#1e1e1e;"></div>
<div class="b" style="left:993px;top:494px;width:1px;height:49px;background:#1e1e1e;"></div>
<div class="b" style="left:1041px;top:477px;width:1px;height:102px;background:#1e1e1e;"></div>
<div class="b" style="left:1096px;top:477px;width:1px;height:102px;background:#1e1e1e;"></div>
<div class="b" style="left:1211px;top:477px;width:1px;height:102px;background:#1e1e1e;"></div>
<div class="b" style="left:1264px;top:477px;width:1px;height:102px;background:#1e1e1e;"></div>
<div class="b" style="left:1424px;top:477px;width:1px;height:102px;background:#1e1e1e;"></div>
<div class="b" style="left:1153px;top:494px;width:1px;height:85px;background:#1e1e1e;"></div>
<div class="b" style="left:934px;top:596px;width:546px;height:1px;background:#1e1e1e;"></div>
<div class="b" style="left:934px;top:613px;width:546px;height:1px;background:#1e1e1e;"></div>
<div class="b" style="left:934px;top:630px;width:546px;height:1px;background:#1e1e1e;"></div>
<div class="b" style="left:1096px;top:596px;width:1px;height:34px;background:#1e1e1e;"></div>
<div class="b" style="left:1153px;top:596px;width:1px;height:34px;background:#1e1e1e;"></div>
<div class="b" style="left:1211px;top:596px;width:1px;height:34px;background:#1e1e1e;"></div>
<div class="b" style="left:1371px;top:596px;width:1px;height:34px;background:#1e1e1e;"></div>
<div class="t" style="top:462.85px;font-size:13px;line-height:13px;color:#333333;left:852.70px;width:600px;text-align:center;">Движение горючего</div>
<div class="t" style="top:464.55px;font-size:11px;line-height:11px;color:#333333;left:1126.00px;width:600px;text-align:center;">Время работы</div>
<div class="t" style="top:481.75px;font-size:11px;line-height:11px;color:#333333;left:688.00px;width:600px;text-align:center;">горючее</div>
<div class="t" style="top:481.75px;font-size:11px;line-height:11px;color:#333333;left:764.30px;width:600px;text-align:center;">выдано,</div>
<div class="t" style="top:498.05px;font-size:11px;line-height:11px;color:#333333;left:768.80px;width:600px;text-align:center;">л</div>
<div class="t" style="top:481.75px;font-size:11px;line-height:11px;color:#333333;left:854.20px;width:600px;text-align:center;">остаток при</div>
<div class="t" style="top:498.05px;font-size:11px;line-height:11px;color:#333333;left:825.10px;width:600px;text-align:center;">выезде</div>
<div class="t" style="top:498.05px;font-size:11px;line-height:11px;color:#333333;left:882.30px;width:600px;text-align:center;">возвра-</div>
<div class="t" style="top:514.15px;font-size:11px;line-height:11px;color:#333333;left:882.30px;width:600px;text-align:center;">щении</div>
<div class="t" style="top:514.15px;font-size:11px;line-height:11px;color:#333333;left:663.50px;width:600px;text-align:center;">марка</div>
<div class="t" style="top:514.15px;font-size:11px;line-height:11px;color:#333333;left:716.90px;width:600px;text-align:center;">код</div>
<div class="t" style="top:481.75px;font-size:11px;line-height:11px;color:#333333;left:1214.00px;">сдано,л</div>
<div class="t" style="top:481.75px;font-size:11px;line-height:11px;color:#333333;left:1017.00px;width:600px;text-align:center;">коэффициент</div>
<div class="t" style="top:498.05px;font-size:11px;line-height:11px;color:#333333;left:1017.00px;width:600px;text-align:center;">изменения</div>
<div class="t" style="top:513.75px;font-size:11px;line-height:11px;color:#333333;left:1017.00px;width:600px;text-align:center;">нормы</div>
<div class="t" style="top:481.75px;font-size:11px;line-height:11px;color:#333333;left:1372.70px;">спецобору</div>
<div class="t" style="top:498.05px;font-size:11px;line-height:11px;color:#333333;left:1097.90px;width:600px;text-align:center;">дования</div>
<div class="t" style="top:481.75px;font-size:11px;line-height:11px;color:#333333;left:1151.80px;width:600px;text-align:center;">двига-</div>
<div class="t" style="top:498.05px;font-size:11px;line-height:11px;color:#333333;left:1151.80px;width:600px;text-align:center;">теля</div>
<div class="t" style="top:530.45px;font-size:13px;line-height:13px;color:#333333;left:663.50px;width:600px;text-align:center;">9</div>
<div class="t" style="top:530.45px;font-size:13px;line-height:13px;color:#333333;left:717.00px;width:600px;text-align:center;">10</div>
<div class="t" style="top:530.45px;font-size:13px;line-height:13px;color:#333333;left:768.80px;width:600px;text-align:center;">11</div>
<div class="t" style="top:530.45px;font-size:13px;line-height:13px;color:#333333;left:824.50px;width:600px;text-align:center;">12</div>
<div class="t" style="top:530.45px;font-size:13px;line-height:13px;color:#333333;left:882.30px;width:600px;text-align:center;">13</div>
<div class="t" style="top:530.45px;font-size:13px;line-height:13px;color:#333333;left:937.50px;width:600px;text-align:center;">14</div>
<div class="t" style="top:530.45px;font-size:13px;line-height:13px;color:#333333;left:1017.50px;width:600px;text-align:center;">15</div>
<div class="t" style="top:530.45px;font-size:13px;line-height:13px;color:#333333;left:1097.50px;width:600px;text-align:center;">16</div>
<div class="t" style="top:530.45px;font-size:13px;line-height:13px;color:#333333;left:1152.00px;width:600px;text-align:center;">17</div>
<div class="t" style="top:582.35px;font-size:13px;line-height:13px;color:#333333;left:906.60px;width:600px;text-align:center;">ПОДПИСЬ</div>
<div class="t" style="top:600.95px;font-size:11px;line-height:11px;color:#333333;left:715.40px;width:600px;text-align:center;">заправщика</div>
<div class="t" style="top:600.95px;font-size:11px;line-height:11px;color:#333333;left:824.50px;width:600px;text-align:center;">механика</div>
<div class="t" style="top:600.95px;font-size:11px;line-height:11px;color:#333333;left:882.30px;width:600px;text-align:center;">механика</div>
<div class="t" style="top:600.95px;font-size:11px;line-height:11px;color:#333333;left:991.10px;width:600px;text-align:center;">заправщика</div>
<div class="t" style="top:600.95px;font-size:11px;line-height:11px;color:#333333;left:1126.00px;width:600px;text-align:center;">диспетчера</div>
<div class="t" style="top:633.05px;font-size:13px;line-height:13px;color:#333333;left:938.60px;">Автомобиль технически исправен.</div>
<div class="t" style="top:633.05px;font-size:13px;line-height:13px;color:#333333;left:1215.20px;">Особые отметки</div>
<div class="b" style="left:1312px;top:645px;width:139px;height:1px;background:#3a3a3a;"></div>
<div class="t" style="top:649.65px;font-size:13px;line-height:13px;color:#333333;left:938.60px;">Выезд разрешен.</div>
<div class="t" style="top:664.65px;font-size:13px;line-height:13px;color:#333333;left:938.60px;">Механик</div>
<div class="b" style="left:994px;top:678px;width:272px;height:1px;background:repeating-linear-gradient(90deg,#2a2a2a 0 1px,transparent 1px 2px);"></div>
<div class="t" style="top:664.65px;font-size:13px;line-height:13px;color:#333333;left:1098.00px;width:600px;text-align:center;">Кляхин А.Н.</div>
<div class="b" style="left:1318px;top:678px;width:164px;height:1px;background:repeating-linear-gradient(90deg,#2a2a2a 0 1px,transparent 1px 2px);"></div>
<div class="t" style="top:681.45px;font-size:11px;line-height:11px;color:#333333;left:772.80px;width:600px;text-align:center;">дата и время</div>
<div class="t" style="top:681.45px;font-size:11px;line-height:11px;color:#333333;left:908.60px;width:600px;text-align:center;">подпись</div>
<div class="t" style="top:681.45px;font-size:11px;line-height:11px;color:#333333;left:1098.60px;width:600px;text-align:center;">расшифровка подписи</div>
<div class="t" style="top:697.25px;font-size:13px;line-height:13px;color:#333333;left:349.70px;width:800px;text-align:right;">Автомобиль принял. Водитель</div>
<div class="b" style="left:1154px;top:710px;width:112px;height:1px;background:repeating-linear-gradient(90deg,#2a2a2a 0 1px,transparent 1px 2px);"></div>
<div class="t" style="top:697.25px;font-size:13px;line-height:13px;color:#333333;left:1098.00px;width:600px;text-align:center;">Прудников И.Г.</div>
<div class="b" style="left:1318px;top:710px;width:164px;height:1px;background:repeating-linear-gradient(90deg,#2a2a2a 0 1px,transparent 1px 2px);"></div>
<div class="t" style="top:713.15px;font-size:11px;line-height:11px;color:#333333;left:908.60px;width:600px;text-align:center;">подпись</div>
<div class="t" style="top:713.15px;font-size:11px;line-height:11px;color:#333333;left:1098.60px;width:600px;text-align:center;">расшифровка подписи</div>
<div class="t" style="top:732.75px;font-size:11px;line-height:11px;color:#333333;left:908.60px;width:600px;text-align:center;">исправен</div>
<div class="t" style="top:739.45px;font-size:13px;line-height:13px;color:#333333;left:349.70px;width:800px;text-align:right;">При возвращении автомобиль</div>
<div class="b" style="left:1154px;top:744px;width:112px;height:1px;background:repeating-linear-gradient(90deg,#2a2a2a 0 1px,transparent 1px 2px);"></div>
<div class="t" style="top:749.35px;font-size:11px;line-height:11px;color:#333333;left:908.60px;width:600px;text-align:center;">не исправен</div>
<div class="t" style="top:765.75px;font-size:13px;line-height:13px;color:#333333;left:349.70px;width:800px;text-align:right;">Сдал водитель</div>
<div class="b" style="left:1154px;top:778px;width:112px;height:1px;background:repeating-linear-gradient(90deg,#2a2a2a 0 1px,transparent 1px 2px);"></div>
<div class="t" style="top:765.75px;font-size:13px;line-height:13px;color:#333333;left:1098.00px;width:600px;text-align:center;">Прудников И.Г.</div>
<div class="b" style="left:1318px;top:778px;width:164px;height:1px;background:repeating-linear-gradient(90deg,#2a2a2a 0 1px,transparent 1px 2px);"></div>
<div class="t" style="top:781.05px;font-size:11px;line-height:11px;color:#333333;left:908.60px;width:600px;text-align:center;">подпись</div>
<div class="t" style="top:781.05px;font-size:11px;line-height:11px;color:#333333;left:1098.60px;width:600px;text-align:center;">расшифровка подписи</div>
<div class="t" style="top:798.95px;font-size:13px;line-height:13px;color:#333333;left:349.70px;width:800px;text-align:right;">Принял механик</div>
<div class="b" style="left:1154px;top:812px;width:112px;height:1px;background:repeating-linear-gradient(90deg,#2a2a2a 0 1px,transparent 1px 2px);"></div>
<div class="b" style="left:1318px;top:812px;width:164px;height:1px;background:repeating-linear-gradient(90deg,#2a2a2a 0 1px,transparent 1px 2px);"></div>
<div class="t" style="top:815.75px;font-size:11px;line-height:11px;color:#333333;left:908.60px;width:600px;text-align:center;">подпись</div>
<div class="t" style="top:815.75px;font-size:11px;line-height:11px;color:#333333;left:1098.60px;width:600px;text-align:center;">расшифровка подписи</div>
<div class="t" style="top:836.65px;font-size:13px;line-height:13px;color:#333333;left:996.80px;">ЛИНИЯ ОТРЕЗА</div>
<div class="b" style="left:163px;top:852px;width:1319px;height:2px;background:#1e1e1e;"></div>
<div class="b" style="left:164px;top:857px;width:646px;height:2px;background:#1e1e1e;"></div>
<div class="b" style="left:164px;top:857px;width:2px;height:151px;background:#1e1e1e;"></div>
<div class="b" style="left:808px;top:857px;width:2px;height:151px;background:#1e1e1e;"></div>
<div class="b" style="left:164px;top:895px;width:644px;height:1px;background:#1e1e1e;"></div>
<div class="b" style="left:267px;top:942px;width:541px;height:1px;background:#1e1e1e;"></div>
<div class="b" style="left:164px;top:958px;width:644px;height:2px;background:#1e1e1e;"></div>
<div class="b" style="left:164px;top:987px;width:644px;height:1px;background:#1e1e1e;"></div>
<div class="b" style="left:164px;top:1004px;width:644px;height:1px;background:#1e1e1e;"></div>
<div class="b" style="left:267px;top:895px;width:1px;height:113px;background:#1e1e1e;"></div>
<div class="b" style="left:321px;top:895px;width:1px;height:113px;background:#1e1e1e;"></div>
<div class="b" style="left:373px;top:895px;width:1px;height:113px;background:#1e1e1e;"></div>
<div class="b" style="left:424px;top:895px;width:1px;height:113px;background:#1e1e1e;"></div>
<div class="b" style="left:469px;top:911px;width:1px;height:97px;background:#1e1e1e;"></div>
<div class="b" style="left:531px;top:895px;width:1px;height:113px;background:#1e1e1e;"></div>
<div class="b" style="left:580px;top:895px;width:1px;height:113px;background:#1e1e1e;"></div>
<div class="b" style="left:630px;top:895px;width:1px;height:113px;background:#1e1e1e;"></div>
<div class="b" style="left:700px;top:895px;width:1px;height:113px;background:#1e1e1e;"></div>
<div class="b" style="left:739px;top:895px;width:1px;height:113px;background:#1e1e1e;"></div>
<div class="b" style="left:424px;top:911px;width:107px;height:1px;background:#1e1e1e;"></div>
<div class="t" style="top:863.98px;font-size:11.2px;line-height:11.2px;color:#333333;left:185.40px;width:600px;text-align:center;">ТАЛОН ВТОРОГО ЗАКАЗЧИКА (заполняется в организации-владельце автотранспорта)</div>
<div class="t" style="top:882.55px;font-size:11px;line-height:11px;color:#333333;left:185.40px;width:600px;text-align:center;">К путевому листу №4 от 01 июня 2018</div>
<div class="t" style="top:898.79px;font-size:11.3px;line-height:11.3px;color:#333333;left:-83.50px;width:600px;text-align:center;">Результат по</div>
<div class="t" style="top:915.79px;font-size:12.6px;line-height:12.6px;color:#333333;left:-83.50px;width:600px;text-align:center;">второму</div>
<div class="t" style="top:929.95px;font-size:11px;line-height:11px;color:#333333;left:-83.50px;width:600px;text-align:center;">заказчику</div>
<div class="t" style="top:899.05px;font-size:11px;line-height:11px;color:#333333;left:-5.00px;width:600px;text-align:center;">Время</div>
<div class="t" style="top:916.65px;font-size:11px;line-height:11px;color:#333333;left:-5.00px;width:600px;text-align:center;">оплачи-</div>
<div class="t" style="top:929.75px;font-size:11px;line-height:11px;color:#333333;left:-5.00px;width:600px;text-align:center;">ваемое</div>
<div class="t" style="top:899.05px;font-size:11px;line-height:11px;color:#333333;left:48.00px;width:600px;text-align:center;">Ездки</div>
<div class="t" style="top:899.05px;font-size:11px;line-height:11px;color:#333333;left:99.50px;width:600px;text-align:center;">Экспе-</div>
<div class="t" style="top:916.65px;font-size:11px;line-height:11px;color:#333333;left:99.50px;width:600px;text-align:center;">дитор</div>
<div class="t" style="top:899.05px;font-size:11px;line-height:11px;color:#333333;left:178.50px;width:600px;text-align:center;">Пробег</div>
<div class="t" style="top:916.65px;font-size:11px;line-height:11px;color:#333333;left:147.50px;width:600px;text-align:center;">всего</div>
<div class="t" style="top:916.65px;font-size:11px;line-height:11px;color:#333333;left:201.00px;width:600px;text-align:center;">с грузом</div>
<div class="t" style="top:899.05px;font-size:11px;line-height:11px;color:#333333;left:256.50px;width:600px;text-align:center;">Пере-</div>
<div class="t" style="top:916.65px;font-size:11px;line-height:11px;color:#333333;left:256.50px;width:600px;text-align:center;">пробег</div>
<div class="t" style="top:899.05px;font-size:11px;line-height:11px;color:#333333;left:306.00px;width:600px;text-align:center;">Тонны</div>
<div class="t" style="top:899.05px;font-size:11px;line-height:11px;color:#333333;left:366.00px;width:600px;text-align:center;">Т-км</div>
<div class="t" style="top:899.05px;font-size:11px;line-height:11px;color:#333333;left:474.50px;width:600px;text-align:center;">Всего</div>
<div class="t" style="top:916.65px;font-size:11px;line-height:11px;color:#333333;left:474.50px;width:600px;text-align:center;">к оплате</div>
<div class="t" style="top:945.84px;font-size:10.9px;line-height:10.9px;color:#333333;left:-5.00px;width:600px;text-align:center;">33</div>
<div class="t" style="top:945.84px;font-size:10.9px;line-height:10.9px;color:#333333;left:48.00px;width:600px;text-align:center;">34</div>
<div class="t" style="top:945.84px;font-size:10.9px;line-height:10.9px;color:#333333;left:99.50px;width:600px;text-align:center;">35</div>
<div class="t" style="top:945.84px;font-size:10.9px;line-height:10.9px;color:#333333;left:147.50px;width:600px;text-align:center;">36</div>
<div class="t" style="top:945.84px;font-size:10.9px;line-height:10.9px;color:#333333;left:201.00px;width:600px;text-align:center;">37</div>
<div class="t" style="top:945.84px;font-size:10.9px;line-height:10.9px;color:#333333;left:256.50px;width:600px;text-align:center;">38</div>
<div class="t" style="top:945.84px;font-size:10.9px;line-height:10.9px;color:#333333;left:306.00px;width:600px;text-align:center;">39</div>
<div class="t" style="top:945.84px;font-size:10.9px;line-height:10.9px;color:#333333;left:366.00px;width:600px;text-align:center;">40</div>
<div class="t" style="top:945.84px;font-size:10.9px;line-height:10.9px;color:#333333;left:420.50px;width:600px;text-align:center;">41</div>
<div class="t" style="top:945.84px;font-size:10.9px;line-height:10.9px;color:#333333;left:474.50px;width:600px;text-align:center;">42</div>
<div class="t" style="top:961.19px;font-size:10.6px;line-height:10.6px;color:#333333;left:166.50px;">Единица</div>
<div class="t" style="top:974.89px;font-size:10.6px;line-height:10.6px;color:#333333;left:166.50px;">измерения</div>
<div class="t" style="top:960.95px;font-size:11px;line-height:11px;color:#333333;left:-5.00px;width:600px;text-align:center;">ч,мин.</div>
<div class="t" style="top:960.95px;font-size:11px;line-height:11px;color:#333333;left:48.00px;width:600px;text-align:center;">ед.</div>
<div class="t" style="top:960.95px;font-size:11px;line-height:11px;color:#333333;left:99.50px;width:600px;text-align:center;">да/нет</div>
<div class="t" style="top:960.95px;font-size:11px;line-height:11px;color:#333333;left:147.50px;width:600px;text-align:center;">км</div>
<div class="t" style="top:960.95px;font-size:11px;line-height:11px;color:#333333;left:201.00px;width:600px;text-align:center;">км</div>
<div class="t" style="top:960.95px;font-size:11px;line-height:11px;color:#333333;left:256.50px;width:600px;text-align:center;">км</div>
<div class="t" style="top:960.95px;font-size:11px;line-height:11px;color:#333333;left:306.00px;width:600px;text-align:center;">т</div>
<div class="t" style="top:960.95px;font-size:11px;line-height:11px;color:#333333;left:366.00px;width:600px;text-align:center;">ткм</div>
<div class="t" style="top:960.95px;font-size:11px;line-height:11px;color:#333333;left:474.50px;width:600px;text-align:center;">руб.коп.</div>
<div class="t" style="top:991.70px;font-size:10.7px;line-height:10.7px;color:#333333;left:166.50px;">Выполнено</div>
<div class="t" style="top:990.05px;font-size:13px;line-height:13px;color:#333333;left:474.50px;width:600px;text-align:center;">X</div>
<div class="b" style="left:837px;top:857px;width:645px;height:2px;background:#1e1e1e;"></div>
<div class="b" style="left:837px;top:857px;width:2px;height:151px;background:#1e1e1e;"></div>
<div class="b" style="left:1480px;top:857px;width:2px;height:151px;background:#1e1e1e;"></div>
<div class="b" style="left:837px;top:895px;width:643px;height:1px;background:#1e1e1e;"></div>
<div class="b" style="left:934px;top:942px;width:546px;height:1px;background:#1e1e1e;"></div>
<div class="b" style="left:837px;top:958px;width:643px;height:2px;background:#1e1e1e;"></div>
<div class="b" style="left:837px;top:987px;width:643px;height:1px;background:#1e1e1e;"></div>
<div class="b" style="left:837px;top:1004px;width:643px;height:1px;background:#1e1e1e;"></div>
<div class="b" style="left:934px;top:895px;width:1px;height:113px;background:#1e1e1e;"></div>
<div class="b" style="left:993px;top:895px;width:1px;height:113px;background:#1e1e1e;"></div>
<div class="b" style="left:1041px;top:895px;width:1px;height:113px;background:#1e1e1e;"></div>
<div class="b" style="left:1096px;top:895px;width:1px;height:113px;background:#1e1e1e;"></div>
<div class="b" style="left:1153px;top:911px;width:1px;height:97px;background:#1e1e1e;"></div>
<div class="b" style="left:1211px;top:895px;width:1px;height:113px;background:#1e1e1e;"></div>
<div class="b" style="left:1264px;top:895px;width:1px;height:113px;background:#1e1e1e;"></div>
<div class="b" style="left:1317px;top:895px;width:1px;height:113px;background:#1e1e1e;"></div>
<div class="b" style="left:1371px;top:895px;width:1px;height:113px;background:#1e1e1e;"></div>
<div class="b" style="left:1424px;top:895px;width:1px;height:113px;background:#1e1e1e;"></div>
<div class="b" style="left:1096px;top:911px;width:115px;height:1px;background:#1e1e1e;"></div>
<div class="t" style="top:863.98px;font-size:11.2px;line-height:11.2px;color:#333333;left:895.70px;width:600px;text-align:center;">ТАЛОН ПЕРВОГО ЗАКАЗЧИКА (заполняется в организации-владельце автотранспорта)</div>
<div class="t" style="top:882.55px;font-size:11px;line-height:11px;color:#333333;left:895.70px;width:600px;text-align:center;">К путевому листу №4 от 01 июня 2018</div>
<div class="t" style="top:898.79px;font-size:11.3px;line-height:11.3px;color:#333333;left:586.50px;width:600px;text-align:center;">Результат по</div>
<div class="t" style="top:915.79px;font-size:12.6px;line-height:12.6px;color:#333333;left:586.50px;width:600px;text-align:center;">первому</div>
<div class="t" style="top:929.95px;font-size:11px;line-height:11px;color:#333333;left:586.50px;width:600px;text-align:center;">заказчику</div>
<div class="t" style="top:899.05px;font-size:11px;line-height:11px;color:#333333;left:664.50px;width:600px;text-align:center;">Время</div>
<div class="t" style="top:916.65px;font-size:11px;line-height:11px;color:#333333;left:664.50px;width:600px;text-align:center;">оплачи-</div>
<div class="t" style="top:929.75px;font-size:11px;line-height:11px;color:#333333;left:664.50px;width:600px;text-align:center;">ваемое</div>
<div class="t" style="top:899.05px;font-size:11px;line-height:11px;color:#333333;left:718.00px;width:600px;text-align:center;">Ездки</div>
<div class="t" style="top:899.05px;font-size:11px;line-height:11px;color:#333333;left:769.50px;width:600px;text-align:center;">Экспе-</div>
<div class="t" style="top:916.65px;font-size:11px;line-height:11px;color:#333333;left:769.50px;width:600px;text-align:center;">дитор</div>
<div class="t" style="top:899.05px;font-size:11px;line-height:11px;color:#333333;left:854.50px;width:600px;text-align:center;">Пробег</div>
<div class="t" style="top:916.65px;font-size:11px;line-height:11px;color:#333333;left:825.50px;width:600px;text-align:center;">всего</div>
<div class="t" style="top:916.65px;font-size:11px;line-height:11px;color:#333333;left:883.00px;width:600px;text-align:center;">с грузом</div>
<div class="t" style="top:899.05px;font-size:11px;line-height:11px;color:#333333;left:938.50px;width:600px;text-align:center;">Пере-</div>
<div class="t" style="top:916.65px;font-size:11px;line-height:11px;color:#333333;left:938.50px;width:600px;text-align:center;">пробег</div>
<div class="t" style="top:899.05px;font-size:11px;line-height:11px;color:#333333;left:991.50px;width:600px;text-align:center;">Тонны</div>
<div class="t" style="top:899.05px;font-size:11px;line-height:11px;color:#333333;left:1045.00px;width:600px;text-align:center;">Т-км</div>
<div class="t" style="top:899.05px;font-size:11px;line-height:11px;color:#333333;left:1153.00px;width:600px;text-align:center;">Всего</div>
<div class="t" style="top:916.65px;font-size:11px;line-height:11px;color:#333333;left:1153.00px;width:600px;text-align:center;">к оплате</div>
<div class="t" style="top:945.84px;font-size:10.9px;line-height:10.9px;color:#333333;left:664.50px;width:600px;text-align:center;">43</div>
<div class="t" style="top:945.84px;font-size:10.9px;line-height:10.9px;color:#333333;left:718.00px;width:600px;text-align:center;">44</div>
<div class="t" style="top:945.84px;font-size:10.9px;line-height:10.9px;color:#333333;left:769.50px;width:600px;text-align:center;">45</div>
<div class="t" style="top:945.84px;font-size:10.9px;line-height:10.9px;color:#333333;left:825.50px;width:600px;text-align:center;">46</div>
<div class="t" style="top:945.84px;font-size:10.9px;line-height:10.9px;color:#333333;left:883.00px;width:600px;text-align:center;">47</div>
<div class="t" style="top:945.84px;font-size:10.9px;line-height:10.9px;color:#333333;left:938.50px;width:600px;text-align:center;">48</div>
<div class="t" style="top:945.84px;font-size:10.9px;line-height:10.9px;color:#333333;left:991.50px;width:600px;text-align:center;">49</div>
<div class="t" style="top:945.84px;font-size:10.9px;line-height:10.9px;color:#333333;left:1045.00px;width:600px;text-align:center;">50</div>
<div class="t" style="top:945.84px;font-size:10.9px;line-height:10.9px;color:#333333;left:1098.50px;width:600px;text-align:center;">51</div>
<div class="t" style="top:945.84px;font-size:10.9px;line-height:10.9px;color:#333333;left:1153.00px;width:600px;text-align:center;">52</div>
<div class="t" style="top:961.19px;font-size:10.6px;line-height:10.6px;color:#333333;left:839.50px;">Единица</div>
<div class="t" style="top:974.89px;font-size:10.6px;line-height:10.6px;color:#333333;left:839.50px;">измерения</div>
<div class="t" style="top:960.95px;font-size:11px;line-height:11px;color:#333333;left:664.50px;width:600px;text-align:center;">ч,мин.</div>
<div class="t" style="top:960.95px;font-size:11px;line-height:11px;color:#333333;left:718.00px;width:600px;text-align:center;">ед.</div>
<div class="t" style="top:960.95px;font-size:11px;line-height:11px;color:#333333;left:769.50px;width:600px;text-align:center;">да/нет</div>
<div class="t" style="top:960.95px;font-size:11px;line-height:11px;color:#333333;left:825.50px;width:600px;text-align:center;">км</div>
<div class="t" style="top:960.95px;font-size:11px;line-height:11px;color:#333333;left:883.00px;width:600px;text-align:center;">км</div>
<div class="t" style="top:960.95px;font-size:11px;line-height:11px;color:#333333;left:938.50px;width:600px;text-align:center;">км</div>
<div class="t" style="top:960.95px;font-size:11px;line-height:11px;color:#333333;left:991.50px;width:600px;text-align:center;">т</div>
<div class="t" style="top:960.95px;font-size:11px;line-height:11px;color:#333333;left:1045.00px;width:600px;text-align:center;">ткм</div>
<div class="t" style="top:960.95px;font-size:11px;line-height:11px;color:#333333;left:1153.00px;width:600px;text-align:center;">руб.коп.</div>
<div class="t" style="top:991.70px;font-size:10.7px;line-height:10.7px;color:#333333;left:839.50px;">Выполнено</div>
<div class="t" style="top:990.05px;font-size:13px;line-height:13px;color:#333333;left:718.00px;width:600px;text-align:center;">1</div>
<div class="t" style="top:990.05px;font-size:13px;line-height:13px;color:#333333;left:825.50px;width:600px;text-align:center;">250</div>
<div class="t" style="top:990.05px;font-size:13px;line-height:13px;color:#333333;left:883.00px;width:600px;text-align:center;">250</div>
<div class="t" style="top:990.05px;font-size:13px;line-height:13px;color:#333333;left:1153.00px;width:600px;text-align:center;">X</div>
<div class="b" style="left:935px;top:522px;width:280px;height:61px;border:3px solid #e41c1c;"></div>
<div class="b" style="left:142px;top:1008px;width:1751px;height:13px;background:#fff;"></div>
<svg class="ic" style="left:150px;top:1012px" width="5" height="7" viewBox="0 0 5 7"><path d="M5 0v7L0 3.5z" fill="#c4c4c4"/></svg>
<div class="b" style="left:165px;top:1012px;width:1692px;height:7px;border-radius:4px;background:#d9d9d9"></div>
<div class="b" style="left:165px;top:1012px;width:1598px;height:7px;border-radius:4px;background:#a3a3a3"></div>
<svg class="ic" style="left:1866px;top:1012px" width="5" height="7" viewBox="0 0 5 7"><path d="M0 0v7l5-3.5z" fill="#444"/></svg>
<svg class="ic" style="left:1884px;top:176px" width="7" height="5" viewBox="0 0 7 5"><path d="M0 5h7L3.5 0z" fill="#c4c4c4"/></svg>
<div class="b" style="left:1883px;top:190px;width:8px;height:794px;border-radius:4px;background:#d9d9d9"></div>
<div class="b" style="left:1883px;top:190px;width:8px;height:377px;border-radius:4px;background:#a3a3a3"></div>
<svg class="ic" style="left:1884px;top:995px" width="7" height="5" viewBox="0 0 7 5"><path d="M0 0h7L3.5 5z" fill="#444"/></svg>
<div class="b" style="left:1405px;top:970px;width:317px;height:70px;border:1px solid #cfcfcf;background:rgba(255,255,255,0.18);"></div>
<div class="b" style="left:1723px;top:978px;width:2px;height:53px;background:linear-gradient(90deg,#555,#aaa);"></div>
<div class="t" style="top:984.07px;font-size:15.8px;line-height:15.8px;color:#c0cadc;left:1418.00px;">Lightshot</div>
<svg class="ic" style="left:1680px;top:982px" width="12" height="12" viewBox="0 0 12 12"><path d="M2 11l5-5M6 3a3 3 0 1 0 4 4" stroke="#c8c8c8" stroke-width="2.2" fill="none"/></svg>
<svg class="ic" style="left:1698px;top:982px" width="10" height="10" viewBox="0 0 10 10"><path d="M1 1l8 8M9 1l-8 8" stroke="#c8c8c8" stroke-width="1.6"/></svg>
<div class="t" style="top:1003.35px;font-size:11.7px;line-height:11.7px;color:#a2a2a2;left:1418.00px;">Скриншот сохранён в Screenshot_2.jpg. Кликните для</div>
<div class="t" style="top:1017.65px;font-size:11.7px;line-height:11.7px;color:#a2a2a2;left:1418.00px;">открытия папки со скриншотом.</div>
</body></html>
